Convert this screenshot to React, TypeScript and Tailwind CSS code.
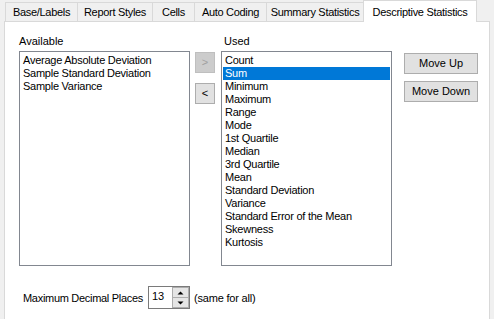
import React from "react";

const tabs = [
  { label: "Base/Labels", w: "w-[73px]" },
  { label: "Report Styles", w: "w-[76px]" },
  { label: "Cells", w: "w-[43px]" },
  { label: "Auto Coding", w: "w-[73px]" },
  { label: "Summary Statistics", w: "w-[98px]" },
];

const available = [
  "Average Absolute Deviation",
  "Sample Standard Deviation",
  "Sample Variance",
];

const used = [
  "Count",
  "Sum",
  "Minimum",
  "Maximum",
  "Range",
  "Mode",
  "1st Quartile",
  "Median",
  "3rd Quartile",
  "Mean",
  "Standard Deviation",
  "Variance",
  "Standard Error of the Mean",
  "Skewness",
  "Kurtosis",
];

function ListBox({ items, selected }: { items: string[]; selected?: number }) {
  return (
    <div className="mt-[3px] h-[215px] w-[171px] border border-[#828790] bg-white px-[1px] pt-[2px]">
      {items.map((it, i) => (
        <div
          key={it}
          className={
            "h-[13px] whitespace-nowrap pl-[2px] text-[11px] leading-[13px] tracking-[-0.25px] " +
            (i === selected ? "bg-[#0078d7] text-white" : "text-black")
          }
        >
          {it}
        </div>
      ))}
    </div>
  );
}

export default function App() {
  return (
    <div className="h-[319px] w-[494px] overflow-hidden bg-[#f0f0f0] font-['Liberation_Sans',Arial,sans-serif] text-black">
      <div className="flex h-[21px] items-end pl-[5px]">
        {tabs.map((t, i) => (
          <div
            key={t.label}
            className={
              "flex h-[19px] items-center justify-center border border-b-0 border-[#d9d9d9] bg-[#f0f0f0] pt-[1px] text-[11px] leading-[13px] tracking-[-0.3px] " +
              t.w +
              (i > 0 ? " -ml-px" : "")
            }
          >
            {t.label}
          </div>
        ))}
        <div className="relative z-10 -mb-px -ml-px flex h-[22px] w-[114px] items-start justify-center border border-b-0 border-[#d9d9d9] bg-white pt-[5px] text-[11px] leading-[13px] tracking-[-0.3px]">
          Descriptive Statistics
        </div>
      </div>
      <div className="ml-[4px] h-[400px] w-[486px] border border-[#d9d9d9] bg-white pl-[14px] pt-[13px]">
        <div className="flex items-start">
          <div className="flex w-[171px] flex-col">
            <div className="h-[13px] text-[11px] leading-[13px]">Available</div>
            <ListBox items={available} />
          </div>
          <div className="ml-[5px] mt-[17px] flex flex-col">
            <div className="flex h-[21px] w-[20px] items-center justify-center border border-[#bfbfbf] bg-[#cccccc] pb-[1px] text-[11px] leading-[13px] text-[#a0a0a0]">
              &gt;
            </div>
            <div className="mt-[10px] flex h-[21px] w-[20px] items-center justify-center border border-[#adadad] bg-[#e1e1e1] pb-[1px] text-[11px] leading-[13px]">
              &lt;
            </div>
          </div>
          <div className="ml-[6px] flex w-[171px] flex-col">
            <div className="h-[13px] pl-[3px] text-[11px] leading-[13px]">Used</div>
            <ListBox items={used} selected={1} />
          </div>
          <div className="ml-[12px] mt-[18px] flex flex-col">
            <div className="flex h-[21px] w-[74px] items-center justify-center border border-[#adadad] bg-[#e1e1e1] text-[11px] leading-[13px]">
              Move Up
            </div>
            <div className="mt-[7px] flex h-[21px] w-[74px] items-center justify-center border border-[#adadad] bg-[#e1e1e1] text-[11px] leading-[13px]">
              Move Down
            </div>
          </div>
        </div>
        <div className="mt-[20px] flex items-center">
          <div className="w-[129px] whitespace-nowrap pl-[4px] pt-[1px] text-[11px] leading-[13px] tracking-[-0.3px]">
            Maximum Decimal Places
          </div>
          <div className="flex h-[23px] w-[42px] border border-[#7a7a7a] bg-white">
            <div className="flex-1 pl-[3px] pt-[3px] text-[11px] leading-[13px]">13</div>
            <div className="flex w-[17px] flex-col">
              <div className="flex h-[11px] items-center justify-center border border-[#adadad] bg-[#e5e5e5]">
                <svg width="7" height="4" viewBox="0 0 7 4">
                  <path d="M0.5 3.5 L3.5 0.5 L6.5 3.5 Z" fill="#000" />
                </svg>
              </div>
              <div className="flex h-[10px] items-center justify-center border border-t-0 border-[#adadad] bg-[#e5e5e5]">
                <svg width="7" height="4" viewBox="0 0 7 4">
                  <path d="M0.5 0.5 L3.5 3.5 L6.5 0.5 Z" fill="#000" />
                </svg>
              </div>
            </div>
          </div>
          <div className="ml-[4px] whitespace-nowrap pt-[1px] text-[11px] leading-[13px] tracking-[-0.2px]">
            (same for all)
          </div>
        </div>
      </div>
    </div>
  );
}
